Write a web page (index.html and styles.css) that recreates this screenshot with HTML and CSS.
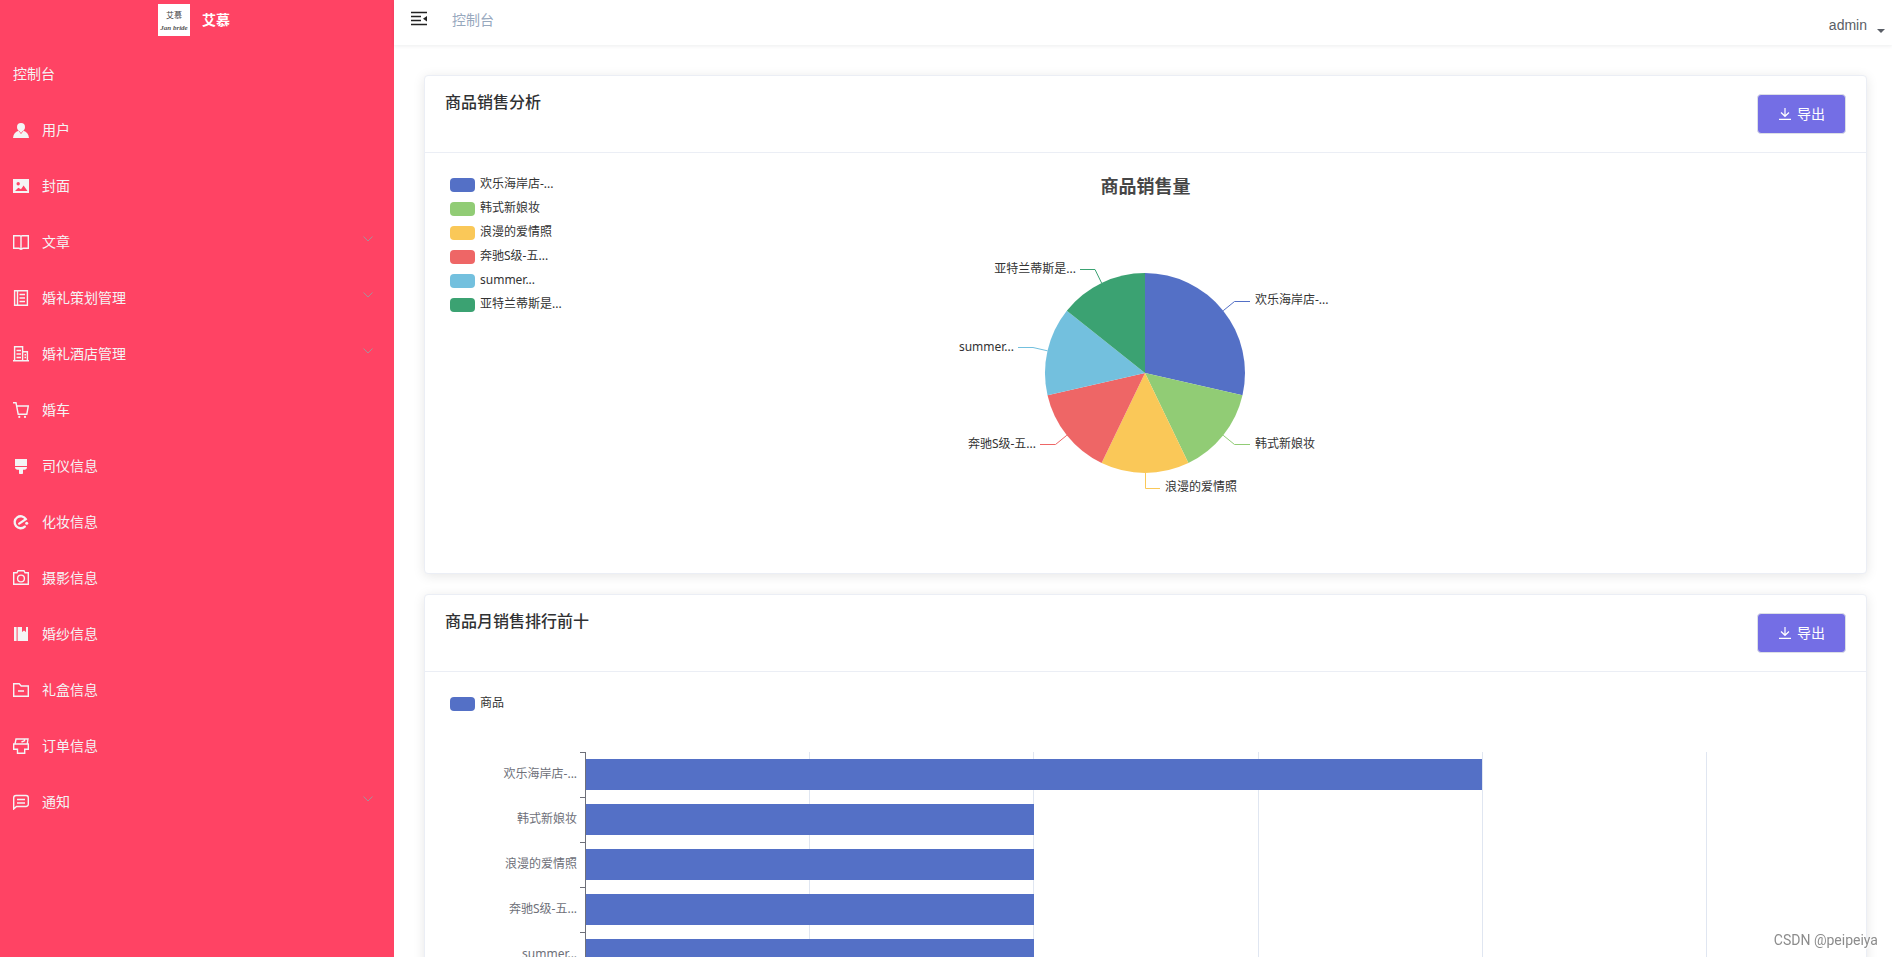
FILE: index.html
```html
<!DOCTYPE html>
<html lang="zh-CN">
<head>
<meta charset="utf-8">
<title>控制台</title>
<link rel="stylesheet" href="styles.css">
</head>
<body>
<div class="app">
  <aside class="sidebar">
    <div class="brand">
      <svg class="brand-logo" viewBox="0 0 32 32" role="img" aria-label="艾慕">
        <rect width="32" height="32" fill="#fff"/>
        <text class="logo-cn" x="16" y="14" text-anchor="middle">艾慕</text>
        <text class="logo-en" x="16" y="26" text-anchor="middle">Jan bride</text>
      </svg>
      <strong class="brand-name">艾慕</strong>
    </div>
    <nav class="menu">
      <a class="menu-item" href="#">控制台</a>
      <a class="menu-item" href="#">
        <svg class="icon" viewBox="0 0 16 16"><path class="fill" d="M8 1a4 4 0 0 1 4 4c0 2-1 3.400-2.200 4L8 11 6.200 9C5 8.400 4 7 4 5a4 4 0 0 1 4-4z"/><path class="fill" d="M5.500 8.800 8 12l2.500-3.200C13.600 9.600 15.600 12 16 16H0c.4-4 2.400-6.400 5.500-7.200z"/></svg>
        <span>用户</span></a>
      <a class="menu-item" href="#">
        <svg class="icon" viewBox="0 0 16 16"><path class="fill" fill-rule="evenodd" d="M0 1h16v14H0zM5.200 4a1.700 1.700 0 1 0 0 3.400 1.700 1.700 0 0 0 0-3.400zM2 13h12.500l-3.900-5.500L8 11.300 5.300 9.800z"/></svg>
        <span>封面</span></a>
      <a class="menu-item" href="#">
        <svg class="icon" viewBox="0 0 16 16"><path class="line" d="M8 2.500 7 1.700H.7v12.600H6l2 1 2-1h5.300V1.700H9zM8 2.500v12.500"/></svg>
        <span>文章</span><svg class="chevron" viewBox="0 0 10 6"><path d="M.5.500 5 5 9.500.5"/></svg></a>
      <a class="menu-item" href="#">
        <svg class="icon" viewBox="0 0 16 16"><path class="line" d="M1.600.7h12.800v14.600H1.600zM4.500.7v14.600M6.500 4.500h5.500M6.500 8h5.500M6.500 11.500h5.500"/></svg>
        <span>婚礼策划管理</span><svg class="chevron" viewBox="0 0 10 6"><path d="M.5.500 5 5 9.500.5"/></svg></a>
      <a class="menu-item" href="#">
        <svg class="icon" viewBox="0 0 16 16"><path class="line" d="M0 14.800h16M1.600 14.800V.7h8v14M9.600 5.700h4.800v9M3.500 4.500H8M3.500 8H8M3.500 11.500H8M11.500 8.700h1.500M11.500 11.500h1.500"/></svg>
        <span>婚礼酒店管理</span><svg class="chevron" viewBox="0 0 10 6"><path d="M.5.500 5 5 9.500.5"/></svg></a>
      <a class="menu-item" href="#">
        <svg class="icon" viewBox="0 0 16 16"><path class="line" d="M0 .8h3l2.200 11.400h8.600L15.300 4H3.700"/><circle class="fill" cx="6.300" cy="14.900" r="1.100"/><circle class="fill" cx="12" cy="14.900" r="1.100"/></svg>
        <span>婚车</span></a>
      <a class="menu-item" href="#">
        <svg class="icon" viewBox="0 0 16 16"><path class="fill" d="M2 1h12v7H2zM2 9h12c0 2-1 2.700-2.500 2.700H10V15c0 .7-.4 1-1 1H7c-.6 0-1-.3-1-1v-3.300H4.500C3 11.700 2 11 2 9z"/></svg>
        <span>司仪信息</span></a>
      <a class="menu-item" href="#">
        <svg class="icon" viewBox="0 0 16 16"><path class="thick" d="M6.200 9.600 12.800 5.200A6 6 0 1 0 11.800 12.600"/><circle class="fill" cx="13.700" cy="9.200" r="1.500"/></svg>
        <span>化妆信息</span></a>
      <a class="menu-item" href="#">
        <svg class="icon" viewBox="0 0 16 16"><path class="line" d="M.7 2.700H4L5 .7h6l1 2h3.300v11.600H.7z"/><circle class="line" cx="8" cy="8.500" r="3.400"/></svg>
        <span>摄影信息</span></a>
      <a class="menu-item" href="#">
        <svg class="icon" viewBox="0 0 16 16"><path class="fill" d="M1 1h2.600v14H1zM4.600 1H9v5l2-1.400L13 6V1h2v14H4.600z"/></svg>
        <span>婚纱信息</span></a>
      <a class="menu-item" href="#">
        <svg class="icon" viewBox="0 0 16 16"><path class="line" d="M.7 1.700h5.500l2 2.300h7.100v10.300H.7zM5 9h6"/></svg>
        <span>礼盒信息</span></a>
      <a class="menu-item" href="#">
        <svg class="icon" viewBox="0 0 16 16"><path class="line" d="M2 6 3 1h12l-.8 5M.7 6h14.600v5.300h-3.600v4H4.500v-4H.7zM8.500 4l3-1.200V1"/></svg>
        <span>订单信息</span></a>
      <a class="menu-item" href="#">
        <svg class="icon" viewBox="0 0 16 16"><path class="line" d="M3 1.500h10a2.300 2.300 0 0 1 2.300 2.300v6.400a2.300 2.300 0 0 1-2.300 2.300H3.500L.7 15V3.800A2.300 2.300 0 0 1 3 1.500zM4 5.500h8M4 9h8"/></svg>
        <span>通知</span><svg class="chevron" viewBox="0 0 10 6"><path d="M.5.500 5 5 9.500.5"/></svg></a>
    </nav>
  </aside>

  <div class="page">
    <header class="topbar">
      <button class="fold" type="button" aria-label="折叠菜单">
        <svg class="icon-fold" viewBox="0 0 16 16"><path d="M0 1.500h16M0 5.500h10M0 9.500h10M0 13.500h16"/><path class="fold-tip" d="M16 5v5.500l-4-2.700z"/></svg>
      </button>
      <span class="crumb">控制台</span>
      <button class="account" type="button"><span>admin</span><span class="caret"></span></button>
    </header>

    <main class="content">
      <section class="card">
        <div class="card-head">
          <h2 class="card-title">商品销售分析</h2>
          <button class="export" type="button"><svg class="icon-down" viewBox="0 0 14 14"><path d="M7 1v8M3 5.500 7 9.300l4-3.800M1 12.300h12"/></svg>导出</button>
        </div>
        <div class="card-body">
          <div class="chart pie-chart">
            <ul class="legend">
              <li class="blue">欢乐海岸店-...</li>
              <li class="green">韩式新娘妆</li>
              <li class="yellow">浪漫的爱情照</li>
              <li class="red">奔驰S级-五...</li>
              <li class="cyan">summer...</li>
              <li class="teal">亚特兰蒂斯是...</li>
            </ul>
            <div class="pie-area">
              <h3 class="pie-title">商品销售量</h3>
              <svg class="pie" viewBox="-220 -140 441 280" role="img" aria-label="商品销售量">
                <path fill="#5470c6" d="M0 0V-100A100 100 0 0 1 97.490 22.250z"/>
                <path fill="#91cc75" d="M0 0 97.490 22.250A100 100 0 0 1 43.390 90.100z"/>
                <path fill="#fac858" d="M0 0 43.390 90.100A100 100 0 0 1-43.390 90.100z"/>
                <path fill="#ee6666" d="M0 0-43.390 90.100A100 100 0 0 1-97.490 22.250z"/>
                <path fill="#73c0de" d="M0 0-97.490 22.250A100 100 0 0 1-78.180-62.350z"/>
                <path fill="#3ba272" d="M0 0-78.180-62.350A100 100 0 0 1 0-100z"/>
                <g class="leader">
                  <path stroke="#5470c6" d="M78.200-62.300 89.500-71.500H105"/>
                  <path stroke="#91cc75" d="M78.200 62.300 89.500 71.500H105"/>
                  <path stroke="#fac858" d="M.5 100V115.500H15"/>
                  <path stroke="#ee6666" d="M-78.200 62.300-89.500 71.500H-105"/>
                  <path stroke="#73c0de" d="M-97.500-22.200-112-25.500H-127"/>
                  <path stroke="#3ba272" d="M-43.400-90-50-103.500H-65"/>
                </g>
                <g class="pie-label">
                  <text x="110" y="-69">欢乐海岸店-...</text>
                  <text x="110" y="75">韩式新娘妆</text>
                  <text x="20" y="118">浪漫的爱情照</text>
                  <text class="end" x="-109" y="75">奔驰S级-五...</text>
                  <text class="end" x="-131" y="-22">summer...</text>
                  <text class="end" x="-69" y="-100">亚特兰蒂斯是...</text>
                </g>
              </svg>
            </div>
          </div>
        </div>
      </section>

      <section class="card">
        <div class="card-head">
          <h2 class="card-title">商品月销售排行前十</h2>
          <button class="export" type="button"><svg class="icon-down" viewBox="0 0 14 14"><path d="M7 1v8M3 5.500 7 9.300l4-3.800M1 12.300h12"/></svg>导出</button>
        </div>
        <div class="card-body">
          <div class="chart bar-chart">
            <ul class="legend"><li class="blue">商品</li></ul>
            <div class="plot">
              <div class="plot-lines"><i></i><i></i><i></i><i></i><i></i></div>
              <div class="plot-rows">
                <div class="row"><span class="row-name">欢乐海岸店-...</span><div class="track"><div class="bar" style="width:80%"></div></div></div>
                <div class="row"><span class="row-name">韩式新娘妆</span><div class="track"><div class="bar" style="width:40%"></div></div></div>
                <div class="row"><span class="row-name">浪漫的爱情照</span><div class="track"><div class="bar" style="width:40%"></div></div></div>
                <div class="row"><span class="row-name">奔驰S级-五...</span><div class="track"><div class="bar" style="width:40%"></div></div></div>
                <div class="row"><span class="row-name">summer...</span><div class="track"><div class="bar" style="width:40%"></div></div></div>
              </div>
            </div>
          </div>
        </div>
      </section>
    </main>
  </div>
</div>
<div class="watermark">CSDN @peipeiya</div>
</body>
</html>
```
FILE: styles.css
```css
* { box-sizing: border-box; }

body {
  margin: 0;
  font: 14px/20px "Noto Sans", "Noto Sans CJK SC", sans-serif;
  color: #303133;
  background: #fff;
}

h2, h3, ul { margin: 0; padding: 0; }
button { font: inherit; border: 0; background: none; padding: 0; cursor: pointer; }

.app { display: flex; height: 100vh; overflow: hidden; }

/* sidebar */
.sidebar { flex: 0 0 394px; background: #ff4364; color: #fff; overflow: hidden; }
.brand { display: flex; align-items: center; gap: 12px; height: 46px; padding: 4px 0 10px 158px; }
.brand-logo { width: 32px; height: 32px; }
.logo-cn { font: 8px "Noto Sans CJK SC", sans-serif; fill: #444; }
.logo-en { font: italic bold 7px "Liberation Serif", serif; fill: #555; }
.brand-name { font-weight: 700; }
.menu { display: flex; flex-direction: column; }
.menu-item {
  display: flex;
  align-items: center;
  gap: 13px;
  height: 56px;
  padding: 0 21px 0 13px;
  color: #f4f4f5;
  text-decoration: none;
}
.icon { width: 16px; height: 16px; flex: none; }
.fill { fill: #f4f4f5; }
.line { fill: none; stroke: #f4f4f5; stroke-width: 1.4; }
.thick { fill: none; stroke: #f4f4f5; stroke-width: 2.3; stroke-linecap: round; }
.chevron { width: 10px; height: 6px; margin: 0 0 6px auto; fill: none; stroke: #a49199; }

/* top bar */
.page { flex: 1; min-width: 0; display: flex; flex-direction: column; }
.topbar {
  flex: none;
  display: flex;
  align-items: flex-start;
  height: 45px;
  padding: 10px 7px 0 17px;
  box-shadow: 0 1px 4px rgba(0, 21, 41, .08);
}
.fold { display: flex; height: 20px; padding-top: 1px; color: #111; }
.icon-fold { width: 16px; height: 16px; fill: none; stroke: #222; stroke-width: 1.4; }
.icon-fold .fold-tip { fill: #222; stroke: none; }
.crumb { margin-left: 25px; color: #97a8be; }
.account {
  display: flex;
  gap: 10px;
  height: 30px;
  margin-left: auto;
  align-items: center;
  font-family: "Liberation Sans", Arial, sans-serif;
  color: #5a5e66;
}
.caret { border: 4px solid transparent; border-top-color: #5a5e66; margin-top: 16px; }

/* cards */
.content { flex: 1; min-height: 0; overflow: hidden; padding: 30px 25px 0 30px; }
.card {
  margin-bottom: 20px;
  border: 1px solid #ebeef5;
  border-radius: 4px;
  background: #fff;
  box-shadow: 0 2px 12px rgba(0, 0, 0, .1);
}
.card-head {
  display: flex;
  justify-content: space-between;
  align-items: flex-start;
  padding: 18px 20px;
  border-bottom: 1px solid #ebeef5;
}
.card-title { font-size: 16px; line-height: 16px; font-weight: 500; }
.export {
  display: flex;
  align-items: center;
  gap: 5px;
  height: 40px;
  padding: 0 20px;
  border: 1px solid #dcdfe6;
  border-radius: 4px;
  background: #746ee5;
  color: #fff;
}
.icon-down { width: 14px; height: 14px; fill: none; stroke: #fff; stroke-width: 1.2; }
.card-body { padding: 20px; }

/* charts */
.chart { font-size: 12px; line-height: 14px; color: #333; }
.legend { list-style: none; display: grid; gap: 10px; padding: 5px; }
.legend li { display: flex; gap: 5px; height: 14px; line-height: 12px; white-space: nowrap; }
.legend li::before { content: ""; width: 25px; height: 14px; border-radius: 4px; background: var(--c); }
.blue { --c: #5470c6; }
.green { --c: #91cc75; }
.yellow { --c: #fac858; }
.red { --c: #ee6666; }
.cyan { --c: #73c0de; }
.teal { --c: #3ba272; }

.pie-chart { display: grid; height: 380px; }
.pie-chart > * { grid-area: 1 / 1; }
.pie-chart .legend { align-content: start; justify-content: start; }
.pie-area { display: flex; flex-direction: column; align-items: center; }
.pie-title { padding-top: 4px; font-size: 18px; line-height: 18px; color: #464646; height: 60px; }
.pie { width: 441px; height: 280px; }
.leader { fill: none; stroke-width: 1; }
.pie-label { fill: #333; }
.end { text-anchor: end; }

.plot { display: grid; margin-top: 36px; }
.plot > * { grid-area: 1 / 1; }
.plot-lines { display: grid; grid-template-columns: repeat(5, 1fr); margin: 0 calc(10% - 1px) 0 calc(10% + 1px); }
.plot-lines i { border-right: 1px solid #e0e6f1; }
.row { display: grid; grid-template-columns: 10% 80% 10%; height: 45px; }
.row-name { padding: 15px 8px 0 0; text-align: right; color: #6e7079; position: relative; }
.row-name::after {
  content: "";
  position: absolute;
  top: 0;
  right: 0;
  width: 5px;
  height: 1px;
  background: #6e7079;
}
.track { border-left: 1px solid #6e7079; padding: 7px 0; }
.bar { height: 31px; background: #5470c6; }

.watermark {
  position: fixed;
  right: 14px;
  bottom: 7px;
  font: 14px/20px Roboto, sans-serif;
  color: #8c8c8c;
  text-shadow: 1px 1px 1px #fff;
}
```
